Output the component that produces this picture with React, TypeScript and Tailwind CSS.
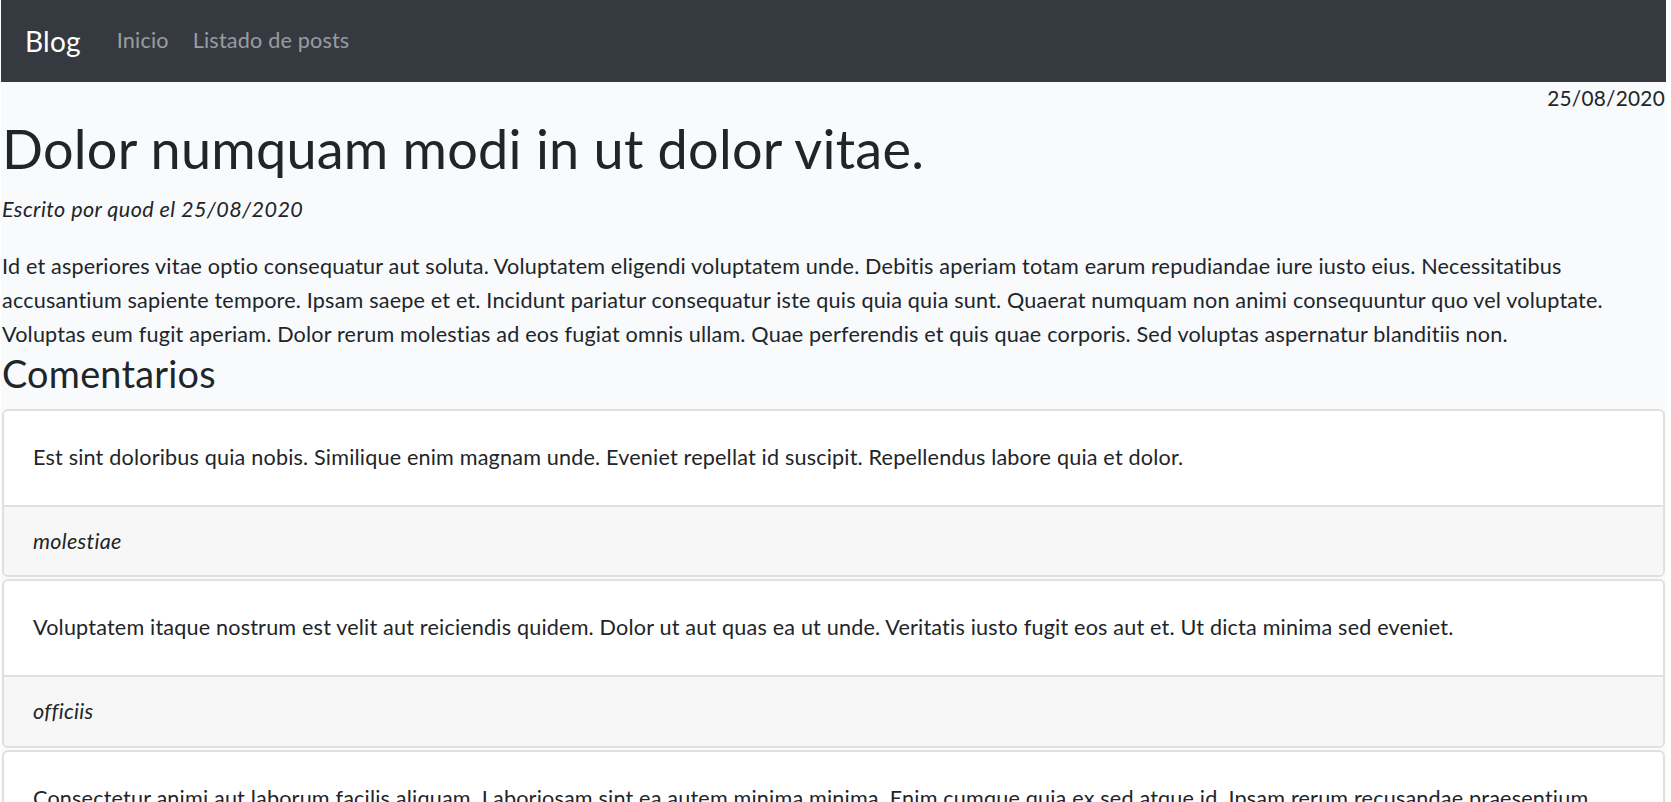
const comments = [
  {
    body: 'Est sint doloribus quia nobis. Similique enim magnam unde. Eveniet repellat id suscipit. Repellendus labore quia et dolor.',
    author: 'molestiae',
  },
  {
    body: 'Voluptatem itaque nostrum est velit aut reiciendis quidem. Dolor ut aut quas ea ut unde. Veritatis iusto fugit eos aut et. Ut dicta minima sed eveniet.',
    author: 'officiis',
  },
  {
    body: 'Consectetur animi aut laborum facilis aliquam. Laboriosam sint ea autem minima minima. Enim cumque quia ex sed atque id. Ipsam rerum recusandae praesentium voluptatem.',
    author: 'et',
  },
];

export default function App(): JSX.Element {
  return (
    <div className="flex min-h-screen bg-white font-['Lato','Noto_Sans',sans-serif] text-[21.6px] leading-[34.56px] tracking-[0.18px] text-[#212529]">
      <div className="ml-[1px] w-[1665px] min-h-[802px] bg-[#f8fafc]">
        {/* Navbar */}
        <nav className="flex h-[82px] items-center bg-[#343a40] px-[24px] pb-[1px]">
          <a className="mr-[24px] text-[28px] leading-[40px] tracking-[0.25px] text-white">Blog</a>
          <a className="px-[12px] text-[rgba(255,255,255,0.5)]">Inicio</a>
          <a className="px-[12px] text-[rgba(255,255,255,0.5)]">Listado de posts</a>
        </nav>

        <main className="px-[1px]">
          <div className="text-right text-[20.8px] leading-[32px] tracking-[0.25px]">25/08/2020</div>

          <h1 className="mt-[3px] mb-[10px] text-[54px] leading-[64.8px] tracking-[0.25px]">
            Dolor numquam modi in ut dolor vitae.
          </h1>
          <p className="mb-[23px] italic tracking-[0.4px]">Escrito por quod el 25/08/2020</p>
          <p className="leading-[34px]">
            Id et asperiores vitae optio consequatur aut soluta. Voluptatem eligendi voluptatem unde. Debitis aperiam
            totam earum repudiandae iure iusto eius. Necessitatibus accusantium sapiente tempore. Ipsam saepe et et.
            Incidunt pariatur consequatur iste quis quia quia sunt. Quaerat numquam non animi consequuntur quo vel
            voluptate. Voluptas eum fugit aperiam. Dolor rerum molestias ad eos fugiat omnis ullam. Quae perferendis et
            quis quae corporis. Sed voluptas aspernatur blanditiis non.
          </p>

          <h3 className="mb-[13px] text-[37.8px] leading-[45px] tracking-[0.25px]">Comentarios</h3>

          {/* Comment cards */}
          <div className="flex flex-col gap-[2px]">
            {comments.map((c) => (
              <div key={c.author} className="overflow-hidden rounded-[6px] border-2 border-[#e0e0e0] bg-white">
                <div className="px-[29px] pt-[29px] pb-[30px]">{c.body}</div>
                <div className="border-t-2 border-[#e0e0e0] bg-[#f7f7f7] px-[29px] py-[17px] italic tracking-[0.3px]">
                  {c.author}
                </div>
              </div>
            ))}
          </div>
        </main>
      </div>
    </div>
  );
}
